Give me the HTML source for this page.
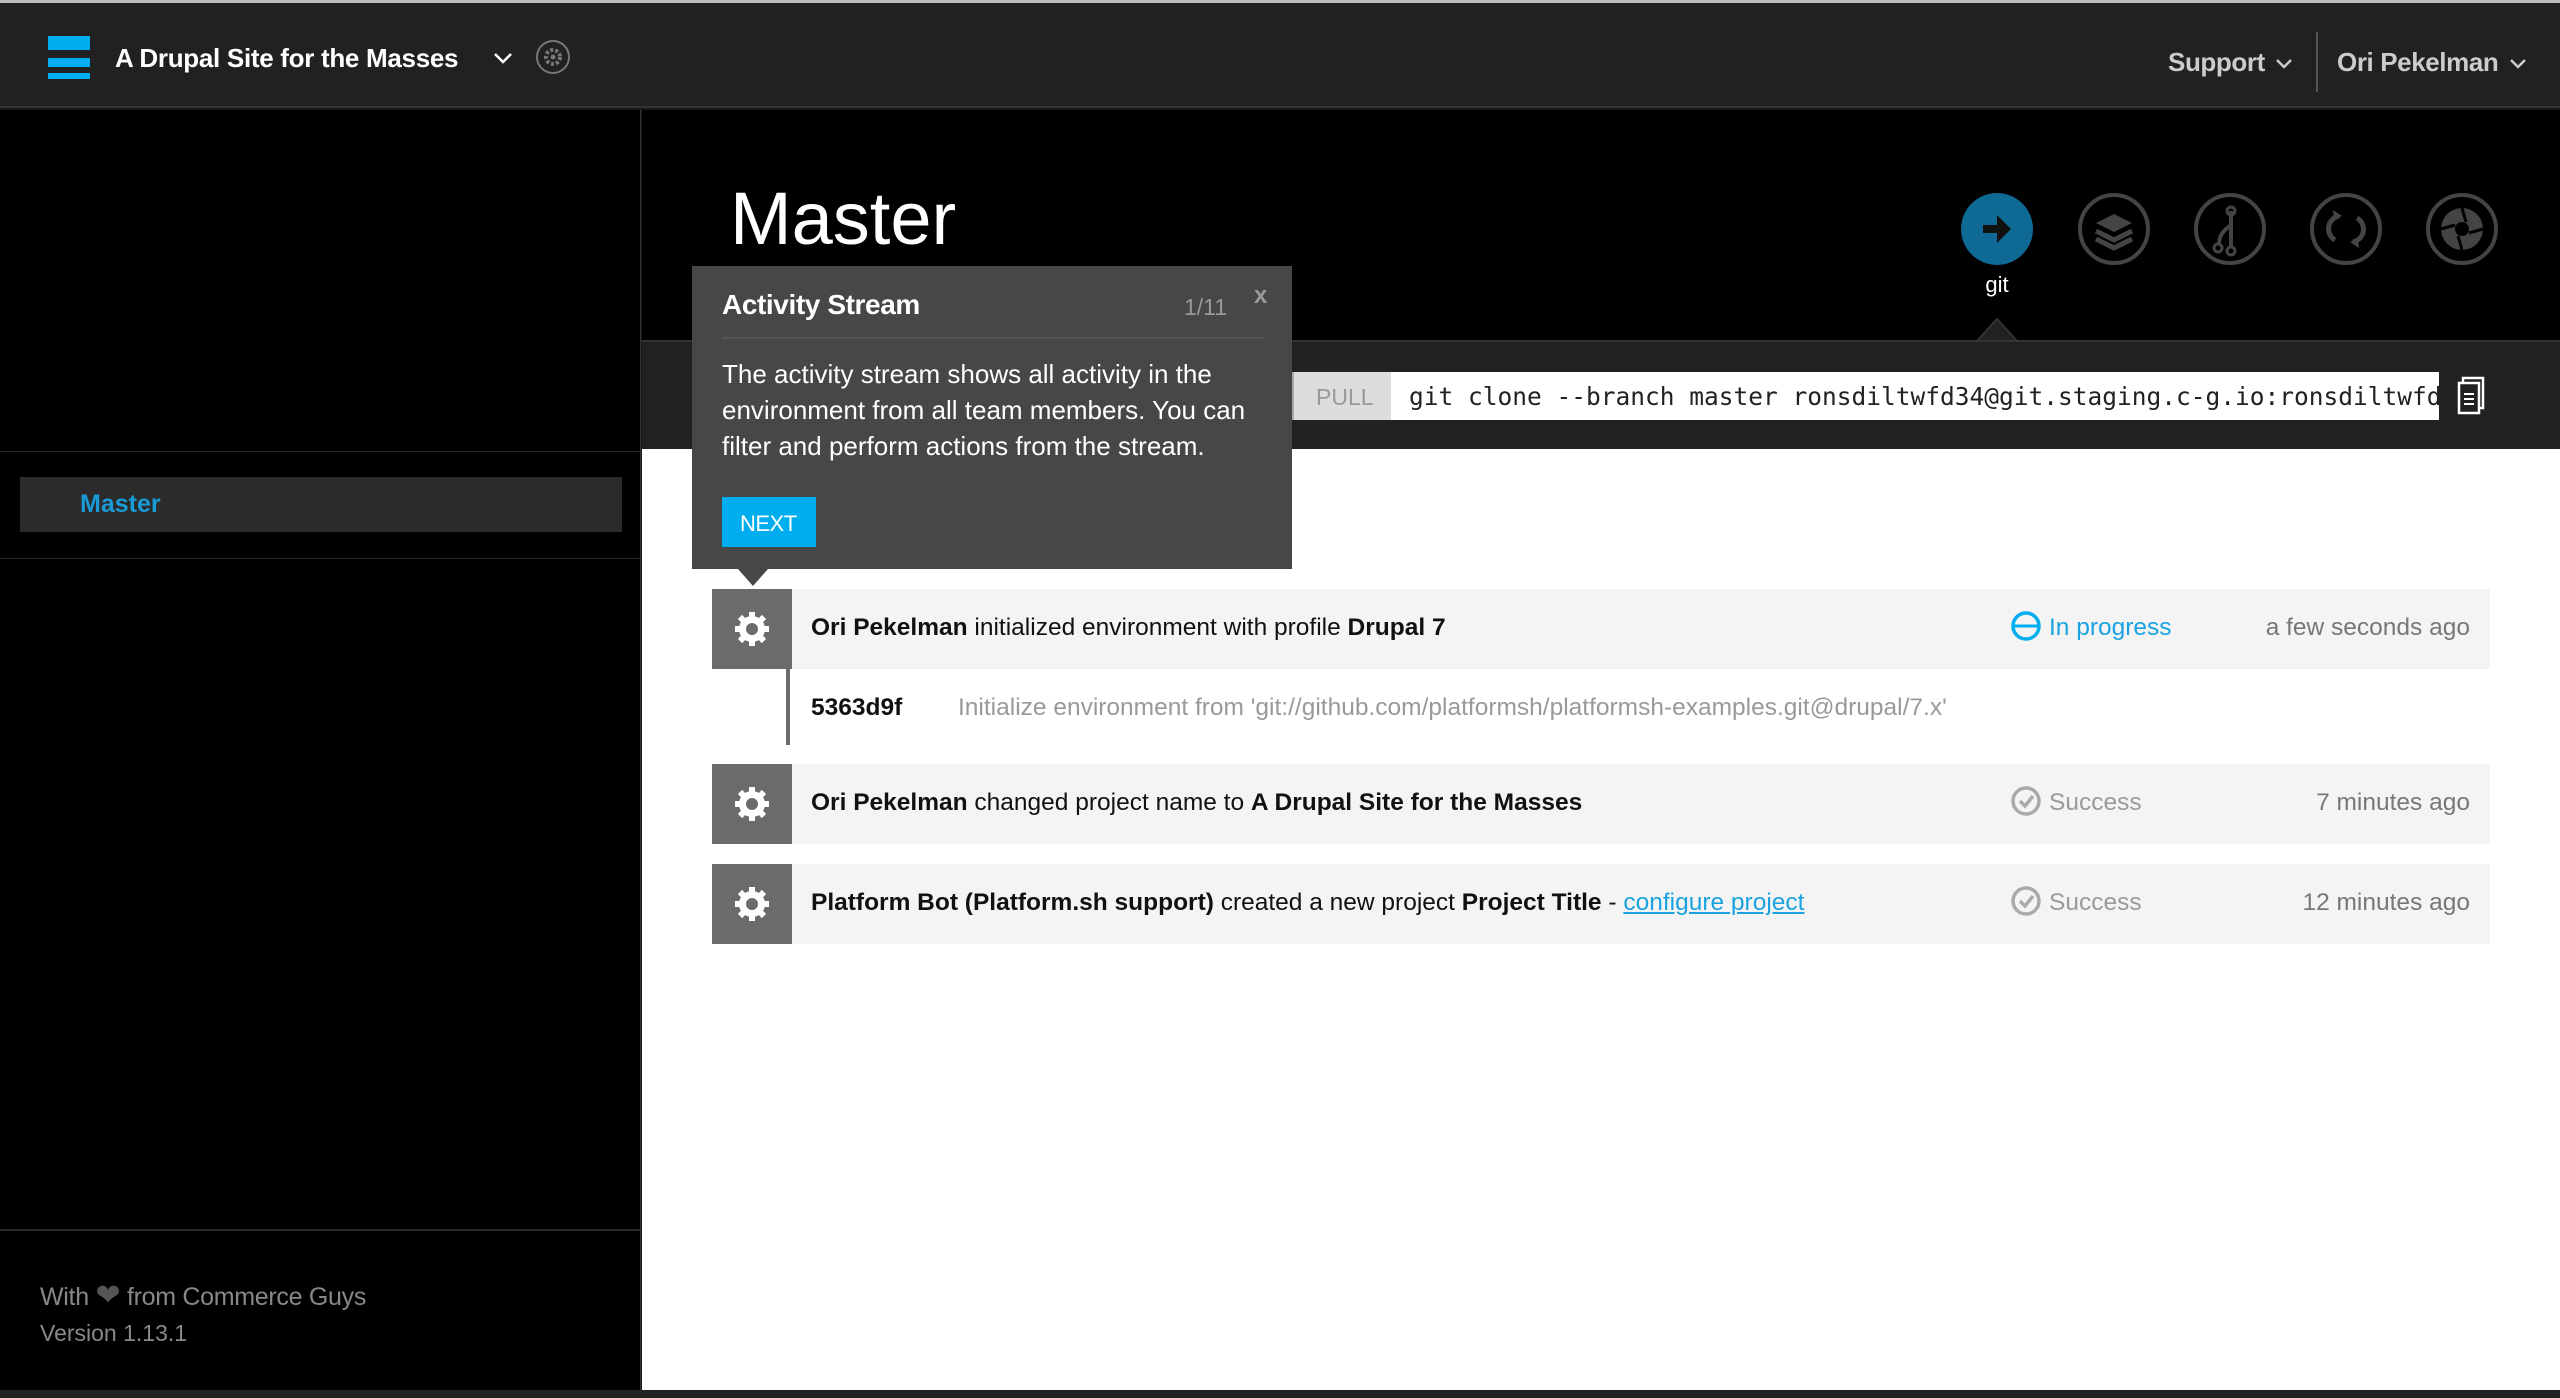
<!DOCTYPE html>
<html><head><meta charset="utf-8"><style>
*{margin:0;padding:0;box-sizing:border-box}
body{width:2560px;height:1398px;overflow:hidden;background:#1a1a1a;font-family:"Liberation Sans",Arial,sans-serif;position:relative}
.a{position:absolute}
.top{left:0;top:0;width:2560px;height:108px;background:#212121;border-top:3px solid #bdbdbd;border-bottom:2px solid #333}
.side{left:0;top:110px;width:641px;height:1280px;background:#000;border-right:1px solid #333}
.main{left:642px;top:110px;width:1918px;height:1280px;background:#fff}
.row{position:absolute;left:712px;width:1778px;height:80px;background:#f4f4f4;font-size:24.5px;color:#111;letter-spacing:0}
.row .ic{position:absolute;left:0;top:0;width:80px;height:80px;background:#6b6b6b}
.row .t{position:absolute;left:99px;top:25px;white-space:nowrap}
.row .st{position:absolute;left:1298px;top:25px;color:#9a9a9a}
.row .tm{position:absolute;right:20px;top:25px;color:#777}
.row .si{position:absolute;left:1298px;top:21px}
.ring{fill:none;stroke:#444;stroke-width:4}
</style></head><body>
<div class="a top">
  <div class="a" style="left:48px;top:33px;width:42px;height:14px;background:#00adef"></div>
  <div class="a" style="left:48px;top:55px;width:42px;height:9px;background:#00adef"></div>
  <div class="a" style="left:48px;top:70px;width:42px;height:6px;background:#00adef"></div>
  <div class="a" style="left:115px;top:40px;font-size:26px;font-weight:bold;color:#fff;letter-spacing:-0.3px">A Drupal Site for the Masses</div>
  <svg class="a" style="left:492px;top:48px" width="22" height="14"><path d="M3 3l8 8 8-8" stroke="#fff" stroke-width="2.5" fill="none"/></svg>
  <svg class="a" style="left:535px;top:36px" width="36" height="36"><circle cx="18" cy="18" r="16" fill="none" stroke="#777" stroke-width="2"/><circle cx="18" cy="18" r="7" fill="none" stroke="#777" stroke-width="4" stroke-dasharray="3 2"/><circle cx="18" cy="18" r="2.5" fill="#777"/></svg>
  <div class="a" style="left:2168px;top:44px;font-size:26px;font-weight:bold;color:#ccc;letter-spacing:-0.4px">Support</div>
  <svg class="a" style="left:2274px;top:54px" width="20" height="14"><path d="M3 3l7 7 7-7" stroke="#ccc" stroke-width="2.5" fill="none"/></svg>
  <div class="a" style="left:2316px;top:29px;width:2px;height:60px;background:#555"></div>
  <div class="a" style="left:2337px;top:44px;font-size:26px;font-weight:bold;color:#ccc;letter-spacing:-0.4px">Ori Pekelman</div>
  <svg class="a" style="left:2508px;top:54px" width="20" height="14"><path d="M3 3l7 7 7-7" stroke="#ccc" stroke-width="2.5" fill="none"/></svg>
</div>
<div class="a side">
  <div class="a" style="left:0;top:341px;width:640px;height:108px;border-top:1px solid #2a2a2a;border-bottom:1px solid #2a2a2a"></div>
  <div class="a" style="left:20px;top:367px;width:602px;height:55px;background:#2b2b2b"></div>
  <div class="a" style="left:80px;top:380px;font-size:25px;font-weight:bold;color:#1a9ad6">Master</div>
  <div class="a" style="left:0;top:1119px;width:640px;height:2px;background:#2a2a2a"></div>
  <div class="a" style="left:40px;top:1168px;font-size:25px;color:#888;letter-spacing:-0.3px">With <span style="color:#555;font-size:30px">&#10084;</span> from Commerce Guys</div>
  <div class="a" style="left:40px;top:1210px;font-size:23px;color:#888">Version 1.13.1</div>
</div>
<div class="a main"></div>
<div class="a" style="left:642px;top:110px;width:1918px;height:230px;background:#000"></div>
<div class="a" style="left:642px;top:340px;width:1918px;height:109px;background:#212121;border-top:2px solid #333"></div>
<div class="a" style="left:730px;top:176px;font-size:74px;color:#fff;font-weight:300">Master</div>
<svg class="a" style="left:1950px;top:190px" width="560" height="155">
  <circle cx="47" cy="39" r="36" fill="#0e6a95"/>
  <path d="M33 35h14v-10l14 14-14 14v-10h-14z" fill="#111"/>
  <circle cx="164" cy="39" r="34" class="ring"/>
  <path d="M146 33l18-9 18 9-18 9z" fill="#444"/><path d="M146 41l18 9 18-9" stroke="#444" stroke-width="5" fill="none"/><path d="M146 49l18 9 18-9" stroke="#444" stroke-width="5" fill="none"/>
  <circle cx="280" cy="39" r="34" class="ring"/>
  <path d="M281 21v36M281 35c-8 6-12 10-12 20" stroke="#444" stroke-width="4" fill="none"/><circle cx="281" cy="21" r="4" fill="none" stroke="#444" stroke-width="3"/><circle cx="281" cy="61" r="4" fill="none" stroke="#444" stroke-width="3"/><circle cx="268" cy="58" r="4" fill="none" stroke="#444" stroke-width="3"/>
  <circle cx="396" cy="39" r="34" class="ring"/>
  <path d="M385 50a13 13 0 0 1 4-24M407 28a13 13 0 0 1-4 24" stroke="#444" stroke-width="5" fill="none"/>
  <path d="M383 20l9 6-8 4zM409 58l-9-6 8-4z" fill="#444"/>
  <circle cx="512" cy="39" r="34" class="ring"/>
  <circle cx="512" cy="39" r="21" fill="#444"/><circle cx="512" cy="39" r="7" fill="#000"/><path d="M512 18l4 14M533 39l-14 4M512 60l-4-14M491 39l14-4" stroke="#000" stroke-width="3"/>
  <text x="47" y="102" fill="#fff" font-size="22" text-anchor="middle" font-family="Liberation Sans">git</text>
  <path d="M27 151l20-22 20 22z" fill="#212121" stroke="#333" stroke-width="2"/>
</svg>
<div class="a" style="left:1290px;top:372px;width:101px;height:48px;background:#ddd;border-left:4px solid #aaa;color:#999;font-size:23px;padding:12px 0 0 22px">PULL</div>
<div class="a" style="left:1391px;top:372px;width:1048px;height:48px;background:#fff;overflow:hidden;white-space:nowrap;font-family:'DejaVu Sans Mono','Liberation Mono',monospace;font-size:24.5px;color:#222;padding:10px 0 0 18px">git clone --branch master ronsdiltwfd34@git.staging.c-g.io:ronsdiltwfd34.git</div>
<svg class="a" style="left:2456px;top:376px" width="32" height="40"><rect x="7" y="2" width="20" height="30" fill="none" stroke="#fff" stroke-width="2.5"/><rect x="3" y="7" width="20" height="30" fill="#212121" stroke="#fff" stroke-width="2.5"/><path d="M8 18h10M8 23h10M8 28h10" stroke="#fff" stroke-width="2"/></svg>

<div class="row" style="top:589px"><div class="ic"></div><div class="t"><b>Ori Pekelman</b> initialized environment with profile <b>Drupal 7</b></div>
<svg class="si" width="34" height="34"><circle cx="16" cy="16" r="13" fill="none" stroke="#00adef" stroke-width="3.5"/><path d="M3 16h26" stroke="#00adef" stroke-width="3"/></svg>
<div class="st" style="left:1337px;color:#1aa3e0">In progress</div><div class="tm">a few seconds ago</div></div>
<div class="a" style="left:786px;top:669px;width:4px;height:76px;background:#6b6b6b"></div>
<div class="a" style="left:811px;top:694px;font-size:24.5px;font-weight:bold;color:#111">5363d9f</div>
<div class="a" style="left:958px;top:694px;font-size:24.5px;color:#999">Initialize environment from 'git://github.com/platformsh/platformsh-examples.git@drupal/7.x'</div>
<div class="row" style="top:764px"><div class="ic"></div><div class="t"><b>Ori Pekelman</b> changed project name to <b>A Drupal Site for the Masses</b></div>
<svg class="si" width="34" height="34"><circle cx="16" cy="16" r="13" fill="none" stroke="#aaa" stroke-width="3.5"/><path d="M10 16l5 5 8-10" stroke="#aaa" stroke-width="3.5" fill="none"/></svg>
<div class="st" style="left:1337px">Success</div><div class="tm">7 minutes ago</div></div>
<div class="row" style="top:864px"><div class="ic"></div><div class="t"><b>Platform Bot (Platform.sh support)</b> created a new project <b>Project Title</b> - <span style="color:#1aa3e0;text-decoration:underline">configure project</span></div>
<svg class="si" width="34" height="34"><circle cx="16" cy="16" r="13" fill="none" stroke="#aaa" stroke-width="3.5"/><path d="M10 16l5 5 8-10" stroke="#aaa" stroke-width="3.5" fill="none"/></svg>
<div class="st" style="left:1337px">Success</div><div class="tm">12 minutes ago</div></div>
<svg class="a" style="left:727px;top:609px" width="50" height="44"><g fill="#fff"><circle cx="25" cy="20" r="13"/><g stroke="#fff" stroke-width="6"><path d="M25 3v34M8 20h34M13 8l24 24M37 8L13 32"/></g></g><circle cx="25" cy="20" r="6" fill="#6b6b6b"/></svg>
<svg class="a" style="left:727px;top:784px" width="50" height="44"><g fill="#fff"><circle cx="25" cy="20" r="13"/><g stroke="#fff" stroke-width="6"><path d="M25 3v34M8 20h34M13 8l24 24M37 8L13 32"/></g></g><circle cx="25" cy="20" r="6" fill="#6b6b6b"/></svg>
<svg class="a" style="left:727px;top:884px" width="50" height="44"><g fill="#fff"><circle cx="25" cy="20" r="13"/><g stroke="#fff" stroke-width="6"><path d="M25 3v34M8 20h34M13 8l24 24M37 8L13 32"/></g></g><circle cx="25" cy="20" r="6" fill="#6b6b6b"/></svg>

<div class="a" style="left:692px;top:266px;width:600px;height:303px;background:#474747">
  <div class="a" style="left:30px;top:23px;font-size:28px;font-weight:bold;color:#fff;letter-spacing:-0.4px">Activity Stream</div>
  <div class="a" style="left:492px;top:28px;font-size:23px;color:#999">1/11</div>
  <div class="a" style="left:562px;top:16px;font-size:24px;font-weight:bold;color:#999">x</div>
  <div class="a" style="left:30px;top:71px;width:542px;height:2px;background:#555"></div>
  <div class="a" style="left:30px;top:90px;width:548px;font-size:26px;line-height:36px;color:#fff;letter-spacing:0">The activity stream shows all activity in the environment from all team members. You can filter and perform actions from the stream.</div>
  <div class="a" style="left:30px;top:231px;width:94px;height:50px;background:#00adef;color:#fff;font-size:22px;letter-spacing:-0.5px;padding:14px 0 0 18px">NEXT</div>
</div>
<div class="a" style="left:738px;top:569px;width:0;height:0;border-left:15px solid transparent;border-right:15px solid transparent;border-top:17px solid #474747"></div>
<div class="a" style="left:0;top:1390px;width:2560px;height:8px;background:#222"></div>
</body></html>
